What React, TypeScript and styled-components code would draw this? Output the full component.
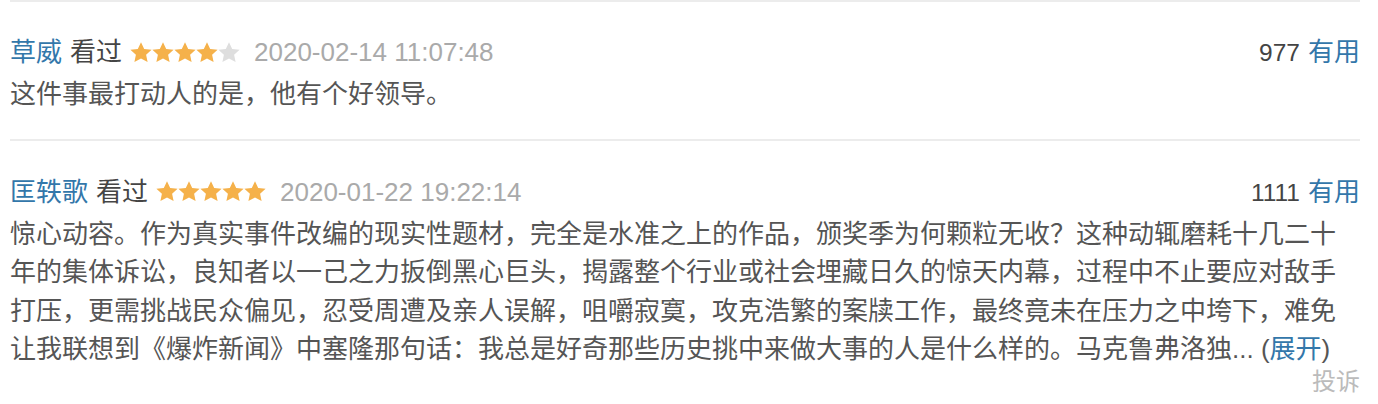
import React from 'react';
import styled, { createGlobalStyle } from 'styled-components';

const GlobalStyle = createGlobalStyle`
  html, body { margin: 0; padding: 0; background: #fff; }
  body {
    font-family: "Liberation Sans", Arial, "Noto Sans CJK SC", sans-serif;
    -webkit-font-smoothing: antialiased;
  }
`;

type Comment = {
  id: number;
  author: string;
  rating: number;
  time: string;
  votes: number;
  content: string;
  folded?: boolean;
};

const COMMENTS: Comment[] = [
  {
    id: 1,
    author: '草威',
    rating: 4,
    time: '2020-02-14 11:07:48',
    votes: 977,
    content: '这件事最打动人的是，他有个好领导。',
  },
  {
    id: 2,
    author: '匡轶歌',
    rating: 5,
    time: '2020-01-22 19:22:14',
    votes: 1111,
    content:
      '惊心动容。作为真实事件改编的现实性题材，完全是水准之上的作品，颁奖季为何颗粒无收？这种动辄磨耗十几二十年的集体诉讼，良知者以一己之力扳倒黑心巨头，揭露整个行业或社会埋藏日久的惊天内幕，过程中不止要应对敌手打压，更需挑战民众偏见，忍受周遭及亲人误解，咀嚼寂寞，攻克浩繁的案牍工作，最终竟未在压力之中垮下，难免让我联想到《爆炸新闻》中塞隆那句话：我总是好奇那些历史挑中来做大事的人是什么样的。马克鲁弗洛独...',
    folded: true,
  },
];

// five-point star, drawn a bit fat like the rating sprite
const STAR_PATH =
  'M12 1.2l3.2 6.7 7.4.9-5.5 5 1.5 7.3L12 17.5l-6.6 3.6 1.5-7.3-5.5-5 7.4-.9z';

const Stars = ({ value }: { value: number }) => (
  <StarRow>
    {[0, 1, 2, 3, 4].map((i) => (
      <svg key={i} width="22" height="22" viewBox="1 1 22 22">
        <path d={STAR_PATH} fill={i < value ? '#f5b14a' : '#dedede'} />
      </svg>
    ))}
  </StarRow>
);

const App = () => {
  return (
    <>
      <GlobalStyle />
      <List>
        {COMMENTS.map((c, idx) => (
          <Item key={c.id}>
            <Header>
              <Info>
                <Author href="#">{c.author}</Author>
                <Status>看过</Status>
                <Stars value={c.rating} />
                <Time>{c.time}</Time>
              </Info>
              <Vote>
                <Count>{c.votes}</Count>
                <Link href="#">有用</Link>
              </Vote>
            </Header>
            <Content>
              {c.content}
              {c.folded && (
                <>
                  {' ('}
                  <Link href="#">展开</Link>
                  {')'}
                </>
              )}
            </Content>
            {idx === COMMENTS.length - 1 && (
              <Footer>
                <Report href="#">投诉</Report>
              </Footer>
            )}
          </Item>
        ))}
      </List>
    </>
  );
};

const List = styled.div`
  width: 1350px;
  padding: 0 0 0 10px;
`;

const Item = styled.div`
  border-top: 2px solid #ececec;
  padding: 32px 0 25px;
  &:first-child { padding-top: 31px; }
  &:last-child { padding-bottom: 0; }
`;

const Header = styled.div`
  display: flex;
  justify-content: space-between;
  align-items: center;
  height: 39px;
  line-height: 39px;
`;

const Info = styled.div`
  display: flex;
  align-items: center;
  gap: 8px;
`;

const Link = styled.a`
  color: #3377aa;
  text-decoration: none;
  font-size: 26px;
`;

const Author = styled(Link)``;

const Status = styled.span`
  color: #454545;
  font-size: 26px;
`;

const StarRow = styled.span`
  display: inline-flex;
  margin-right: 6px;
  svg { display: block; }
`;

const Time = styled.span`
  color: #aaaaaa;
  font-size: 26px;
`;

const Vote = styled.div`
  display: flex;
  align-items: center;
  gap: 8px;
`;

const Count = styled.span`
  color: #444;
  font-size: 24.5px;
`;

const Content = styled.p`
  margin: 3px 0 0;
  font-size: 26px;
  line-height: 38.5px;
  color: #555;
`;

const Footer = styled.div`
  display: flex;
  justify-content: flex-end;
  line-height: 26px;
`;

const Report = styled.a`
  color: #bbbbbb;
  font-size: 24px;
  text-decoration: none;
`;

export default App;
